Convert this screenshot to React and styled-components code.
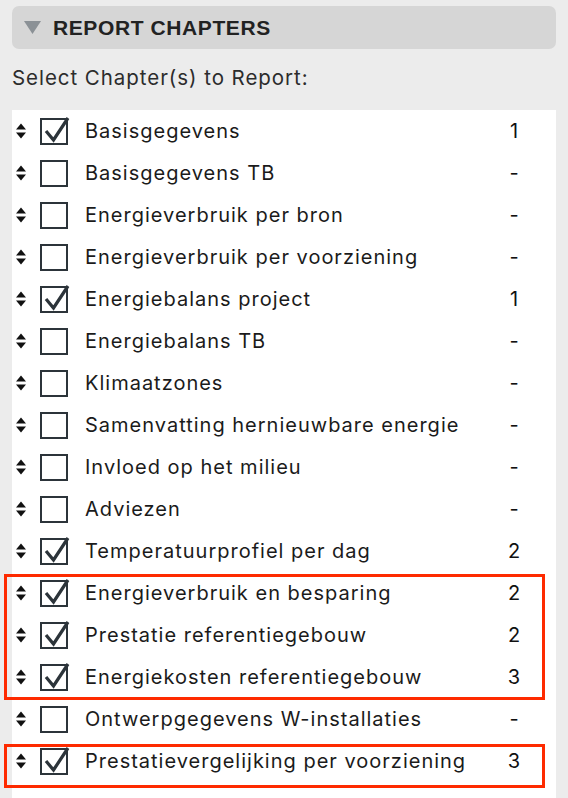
import React from 'react'
import styled, { createGlobalStyle } from 'styled-components'

const GlobalStyle = createGlobalStyle`
  body {
    margin: 0;
    background: #ececec;
    font-family: Inter, "Liberation Sans", Arial, sans-serif;
  }
`

const chapters = [
  { name: 'Basisgegevens', checked: true, page: '1' },
  { name: 'Basisgegevens TB', checked: false, page: '-' },
  { name: 'Energieverbruik per bron', checked: false, page: '-' },
  { name: 'Energieverbruik per voorziening', checked: false, page: '-' },
  { name: 'Energiebalans project', checked: true, page: '1' },
  { name: 'Energiebalans TB', checked: false, page: '-' },
  { name: 'Klimaatzones', checked: false, page: '-' },
  { name: 'Samenvatting hernieuwbare energie', checked: false, page: '-' },
  { name: 'Invloed op het milieu', checked: false, page: '-' },
  { name: 'Adviezen', checked: false, page: '-' },
  { name: 'Temperatuurprofiel per dag', checked: true, page: '2' },
  { name: 'Energieverbruik en besparing', checked: true, page: '2', group: 1 },
  { name: 'Prestatie referentiegebouw', checked: true, page: '2', group: 1 },
  { name: 'Energiekosten referentiegebouw', checked: true, page: '3', group: 1 },
  { name: 'Ontwerpgegevens W-installaties', checked: false, page: '-' },
  { name: 'Prestatievergelijking per voorziening', checked: true, page: '3', group: 2 },
]

const Page = styled.div`
  padding: 6px 12px 0;
`

const Header = styled.div`
  display: flex;
  align-items: center;
  gap: 12px;
  height: 43px;
  padding: 0 12px;
  background: #d6d6d6;
  border-radius: 7px;
`

const HeaderTitle = styled.span`
  font-family: "Liberation Sans", Arial, sans-serif;
  font-size: 21px;
  font-weight: bold;
  letter-spacing: 0.6px;
  color: #222;
`

const Subtitle = styled.div`
  box-sizing: border-box;
  height: 61px;
  padding-top: 17px;
  font-size: 20.5px;
  line-height: 24px;
  letter-spacing: 0.95px;
  color: #2c2c2c;
`

const Panel = styled.div`
  background: #fff;
  padding-bottom: 20px;
`

const Group = styled.div`
  position: relative;

  &::after {
    content: '';
    position: absolute;
    left: -8px;
    right: 11px;
    top: ${p => p.$top}px;
    bottom: ${p => p.$bottom}px;
    border: 3px solid #fe2a00;
    pointer-events: none;
  }
`

const Row = styled.div`
  display: flex;
  align-items: center;
  height: 42px;
  padding-left: 4px;
`

const Sorter = styled.svg`
  width: 10px;
  height: 16px;
  flex: none;
`

const Box = styled.span`
  position: relative;
  width: 24px;
  height: 23px;
  margin-left: 14px;
  border: 2px solid #2c343a;
  flex: none;
`

const Check = styled.svg`
  position: absolute;
  left: 2px;
  top: -4px;
  width: 26px;
  height: 28px;
  overflow: visible;
`

const Label = styled.span`
  flex: 1;
  margin-left: 17px;
  font-size: 20px;
  letter-spacing: 1px;
  color: #1b1b1b;
  white-space: nowrap;
`

const Num = styled.span`
  width: 30px;
  margin-right: 27px;
  text-align: center;
  font-size: 20px;
  color: #111;
`

const SortIcon = () => (
  <Sorter viewBox="0 0 10 16">
    <path d="M5 0.5 L10 6.5 L0 6.5 Z" fill="#111" />
    <path d="M0 9.5 L10 9.5 L5 15.5 Z" fill="#111" />
  </Sorter>
)

const ChapterRow = ({ chapter }) => (
  <Row>
    <SortIcon />
    <Box>
      {chapter.checked && (
        <Check viewBox="0 0 26 28">
          <path d="M2 15 L9.5 24 L24 2" fill="none" stroke="#2c343a" strokeWidth="3.2" strokeLinejoin="miter" />
        </Check>
      )}
    </Box>
    <Label>{chapter.name}</Label>
    <Num>{chapter.page}</Num>
  </Row>
)

const App = () => {
  const blocks = []
  chapters.forEach(c => {
    const last = blocks[blocks.length - 1]
    if (c.group && last && last.group === c.group) last.items.push(c)
    else blocks.push({ group: c.group, items: [c] })
  })

  return (
    <Page>
      <GlobalStyle />
      <Header>
        <svg width="17" height="13" viewBox="0 0 17 13">
          <path d="M0 0 L17 0 L8.5 13 Z" fill="#8b9196" />
        </svg>
        <HeaderTitle>REPORT CHAPTERS</HeaderTitle>
      </Header>
      <Subtitle>Select Chapter(s) to Report:</Subtitle>
      <Panel>
        {blocks.map((b, i) =>
          b.group ? (
            <Group key={i} $top={b.group === 1 ? 2 : 4} $bottom={b.group === 1 ? -2 : -6}>
              {b.items.map(c => <ChapterRow key={c.name} chapter={c} />)}
            </Group>
          ) : (
            b.items.map(c => <ChapterRow key={c.name} chapter={c} />)
          )
        )}
      </Panel>
    </Page>
  )
}

export default App
